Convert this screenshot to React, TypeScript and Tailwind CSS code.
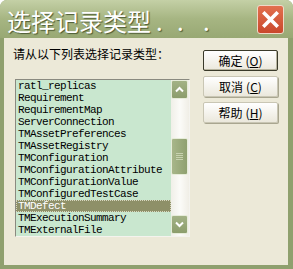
import React from "react";

const items = [
  "ratl_replicas",
  "Requirement",
  "RequirementMap",
  "ServerConnection",
  "TMAssetPreferences",
  "TMAssetRegistry",
  "TMConfiguration",
  "TMConfigurationAttribute",
  "TMConfigurationValue",
  "TMConfiguredTestCase",
  "TMDefect",
  "TMExecutionSummary",
  "TMExternalFile",
];

const cjk = { fontFamily: '"Noto Sans CJK SC", "Noto Sans", sans-serif' };
const mono = { fontFamily: '"Liberation Mono", "DejaVu Sans Mono", monospace' };

function Btn({ label, k, def }: { label: string; k: string; def?: boolean }) {
  return (
    <div
      className={`w-[75px] h-[21px] flex items-center justify-center rounded-[2px] text-[12px] text-black bg-gradient-to-b from-[#ffffff] to-[#ebe8dc] ${
        def
          ? "border border-[#3a3a2a] shadow-[inset_-1px_-1px_0_#b8b59f]"
          : "border border-[#c9c6b4] shadow-[1px_1px_0_#a9a690]"
      }`}
      style={cjk}
    >
      <span>{label}</span>
      <span className="ml-[3px]">
        (<span className="underline">{k}</span>)
      </span>
    </div>
  );
}

export default function App() {
  return (
    <div className="w-[293px] h-[269px] bg-[#8fa06e] rounded-t-[7px] flex flex-col overflow-hidden">
      <div className="h-[38px] shrink-0 bg-gradient-to-b from-[#c4d0a6] via-[#a6b582] to-[#98a874] flex items-center pl-[7px] pr-[9px]">
        <div
          className="flex-1 flex items-center h-[38px] pt-[4px] text-white text-[24px] leading-[30px] whitespace-nowrap [text-shadow:1px_1px_1px_#4d5a33]"
          style={cjk}
        >
          <span>选择记录类型</span>
          <span className="inline-block w-[26px] pl-[5px]">.</span>
          <span className="inline-block w-[26px]">.</span>
          <span className="inline-block w-[26px]">.</span>
        </div>
        <div className="w-[27px] h-[29px] shrink-0 rounded-[3px] border border-[#f0d8c8] bg-gradient-to-b from-[#e2704e] to-[#c9482c] flex items-center justify-center">
          <svg width="17" height="17" viewBox="0 0 17 17">
            <path d="M2.5 2.5 L14.5 14.5 M14.5 2.5 L2.5 14.5" stroke="white" strokeWidth="3.6" strokeLinecap="square" />
          </svg>
        </div>
      </div>
      <div className="flex-1 mx-[4px] mb-[4px] mr-[5px] bg-[#ece9d8] flex">
        <div className="flex flex-col pl-[11px] pt-[8px]">
          <div className="h-[16px] text-[12px] leading-[16px] text-black -ml-[2px]" style={cjk}>
            请从以下列表选择记录类型：
          </div>
          <div className="mt-[17px] w-[175px] h-[158px] border-t border-l border-[#8a8a80] border-b border-r border-b-[#f4f3ee] border-r-[#f4f3ee] bg-[#c9e7cf] flex">
            <div className="flex-1 flex flex-col">
              {items.map((t) => (
                <div
                  key={t}
                  className={`h-[12px] leading-[12px] pl-[2px] text-[11px] tracking-[-0.6px] whitespace-nowrap overflow-hidden ${
                    t === "TMDefect"
                      ? "bg-[#8e9068] text-white outline-1 outline-dotted outline-[#d8d8c0] -outline-offset-1"
                      : "text-black"
                  }`}
                  style={mono}
                >
                  {t}
                </div>
              ))}
            </div>
            <div className="w-[18px] flex flex-col bg-gradient-to-r from-[#f0efe8] via-[#fbfbf8] to-[#f0eee6] pr-[1px]">
              <div className="h-[19px] rounded-[2px] border border-[#e6ecd9] bg-gradient-to-b from-[#a3b286] to-[#8c9d6c] flex items-center justify-center">
                <svg width="9" height="7" viewBox="0 0 9 7">
                  <path d="M1 5.5 L4.5 2 L8 5.5" stroke="white" strokeWidth="2" fill="none" />
                </svg>
              </div>
              <div className="h-[39px]" />
              <div className="h-[37px] rounded-[2px] border border-[#e6ecd9] bg-gradient-to-r from-[#a8b68a] to-[#8fa070] flex flex-col items-center justify-center gap-[1px]">
                <div className="w-[7px] h-[1px] bg-[#c8d2b0]" />
                <div className="w-[7px] h-[1px] bg-[#c8d2b0]" />
                <div className="w-[7px] h-[1px] bg-[#c8d2b0]" />
                <div className="w-[7px] h-[1px] bg-[#c8d2b0]" />
              </div>
              <div className="flex-1" />
              <div className="h-[19px] rounded-[2px] border border-[#e6ecd9] bg-gradient-to-b from-[#a3b286] to-[#8c9d6c] flex items-center justify-center">
                <svg width="9" height="7" viewBox="0 0 9 7">
                  <path d="M1 1.5 L4.5 5 L8 1.5" stroke="white" strokeWidth="2" fill="none" />
                </svg>
              </div>
              <div className="h-[2px]" />
            </div>
          </div>
        </div>
        <div className="flex flex-col gap-[5px] pl-[13px] pt-[12px]">
          <Btn label="确定" k="O" def />
          <Btn label="取消" k="C" />
          <Btn label="帮助" k="H" />
        </div>
      </div>
    </div>
  );
}
